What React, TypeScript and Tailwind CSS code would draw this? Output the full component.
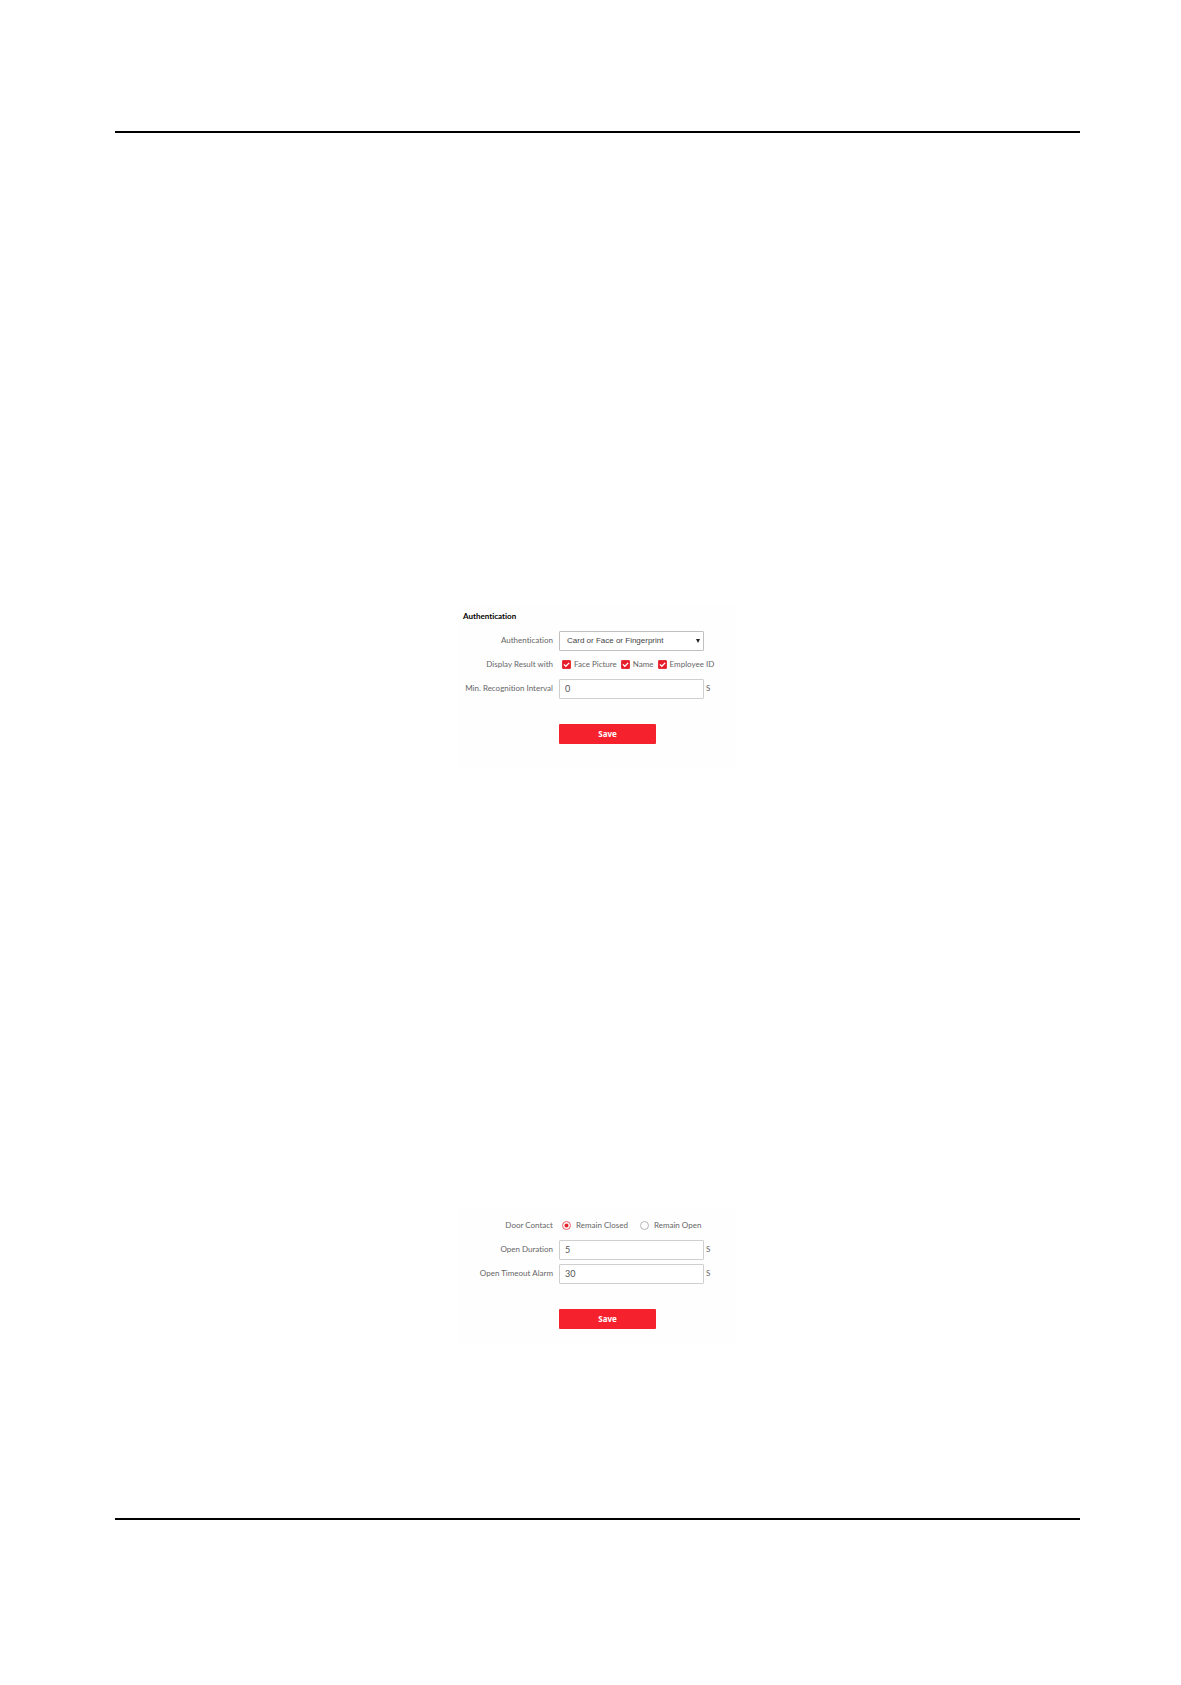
import { useState, type ReactNode } from "react";

const labelText = "text-[8px] leading-[18px] text-[#666666]";
const fieldBox =
  "h-5 w-[145px] rounded-[1px] border border-[#cfcfcf] bg-white px-[5px] pb-px text-[9px] text-[#555555] outline-none";

function Row({ label, htmlFor, children }: { label: string; htmlFor?: string; children: ReactNode }) {
  return (
    <div className="grid h-5 grid-cols-[95px_1fr] items-start gap-x-[6px]">
      {htmlFor ? (
        <label htmlFor={htmlFor} className={`${labelText} text-right whitespace-nowrap`}>
          {label}
        </label>
      ) : (
        <span className={`${labelText} text-right whitespace-nowrap`}>{label}</span>
      )}
      <div className="flex">{children}</div>
    </div>
  );
}

function Seconds({ id, label, initial }: { id: string; label: string; initial: string }) {
  const [value, setValue] = useState(initial);
  return (
    <Row label={label} htmlFor={id}>
      <input id={id} type="text" value={value} onChange={(e) => setValue(e.target.value)} className={fieldBox} />
      <span className={`${labelText} ml-0.5`}>S</span>
    </Row>
  );
}

function Check({ label }: { label: string }) {
  const [on, setOn] = useState(true);
  return (
    <label className="flex items-center gap-[3px] whitespace-nowrap">
      <span className="relative flex size-[9px]">
        <input
          type="checkbox"
          checked={on}
          onChange={() => setOn(!on)}
          className="size-[9px] appearance-none rounded-[1px] border border-[#e8303b] bg-white checked:bg-[#e5202c]"
        />
        {on && (
          <svg viewBox="0 0 9 9" className="pointer-events-none absolute inset-0 size-[9px]" aria-hidden="true">
            <path d="M1.9 4.4 3.8 6.3 7.2 2.9" fill="none" stroke="white" strokeWidth="1.3" />
          </svg>
        )}
      </span>
      <span className={labelText}>{label}</span>
    </label>
  );
}

function Radio({ label, checked, onSelect }: { label: string; checked: boolean; onSelect: () => void }) {
  return (
    <label className="flex items-center gap-[5px] whitespace-nowrap">
      <span className="relative flex size-[9px]">
        <input
          type="radio"
          name="door-contact"
          checked={checked}
          onChange={onSelect}
          className="size-[9px] appearance-none rounded-full border border-[#b5b5b5] bg-white checked:border-[#ee5a63]"
        />
        {checked && (
          <svg viewBox="0 0 9 9" className="pointer-events-none absolute inset-0 size-[9px]" aria-hidden="true">
            <circle cx="4.5" cy="4.5" r="2" fill="#e5202c" />
          </svg>
        )}
      </span>
      <span className={labelText}>{label}</span>
    </label>
  );
}

function Save() {
  return (
    <div className="mt-[25px] pl-[101px]">
      <button
        type="submit"
        className="block h-5 w-[97px] rounded-[1px] bg-[#f5222d] pb-px font-['Noto_Sans',sans-serif] text-[8px] font-bold text-white"
      >
        Save
      </button>
    </div>
  );
}

function AuthenticationForm() {
  const [mode, setMode] = useState("any");
  return (
    <form
      onSubmit={(e) => e.preventDefault()}
      className="mx-auto mt-[473px] w-[279px] bg-[#fefefe] pb-6"
    >
      <h2 className="mb-[5px] pl-[5px] text-[8px] leading-5 font-bold text-black">Authentication</h2>
      <div className="flex flex-col gap-1">
        <Row label="Authentication" htmlFor="auth-mode">
          <span className="relative flex">
            <select
              id="auth-mode"
              value={mode}
              onChange={(e) => setMode(e.target.value)}
              className="h-5 w-[145px] appearance-none rounded-[1px] border border-[#c0c0c0] bg-white pl-[7px] font-['Liberation_Sans',sans-serif] text-[8px] text-[#444444] outline-none"
            >
              <option value="any">Card or Face or Fingerprint</option>
            </select>
            <svg
              viewBox="0 0 4 4"
              className="pointer-events-none absolute top-2 right-1 size-1"
              aria-hidden="true"
            >
              <path d="M0 0h4L2 4z" fill="#222222" />
            </svg>
          </span>
        </Row>
        <Row label="Display Result with">
          <div className="flex gap-1 pl-[3px]">
            <Check label="Face Picture" />
            <Check label="Name" />
            <Check label="Employee ID" />
          </div>
        </Row>
        <Seconds id="min-interval" label="Min. Recognition Interval" initial="0" />
      </div>
      <Save />
    </form>
  );
}

function DoorForm() {
  const [closed, setClosed] = useState(true);
  return (
    <form onSubmit={(e) => e.preventDefault()} className="mx-auto mt-[440px] w-[279px] bg-[#fefefe] pt-2 pb-4">
      <div className="flex flex-col gap-1">
        <Row label="Door Contact">
          <div className="flex gap-3 pl-[3px]">
            <Radio label="Remain Closed" checked={closed} onSelect={() => setClosed(true)} />
            <Radio label="Remain Open" checked={!closed} onSelect={() => setClosed(false)} />
          </div>
        </Row>
        <Seconds id="open-duration" label="Open Duration" initial="5" />
        <Seconds id="open-timeout" label="Open Timeout Alarm" initial="30" />
      </div>
      <Save />
    </form>
  );
}

export default function App() {
  return (
    <main className="min-h-screen bg-white pt-[131px] pr-[101px] pl-[115px] font-['Lato',sans-serif] [font-variant-ligatures:none]">
      <hr className="border-t-2 border-black" />
      <AuthenticationForm />
      <DoorForm />
      <hr className="mt-[173px] border-t-2 border-black" />
    </main>
  );
}
